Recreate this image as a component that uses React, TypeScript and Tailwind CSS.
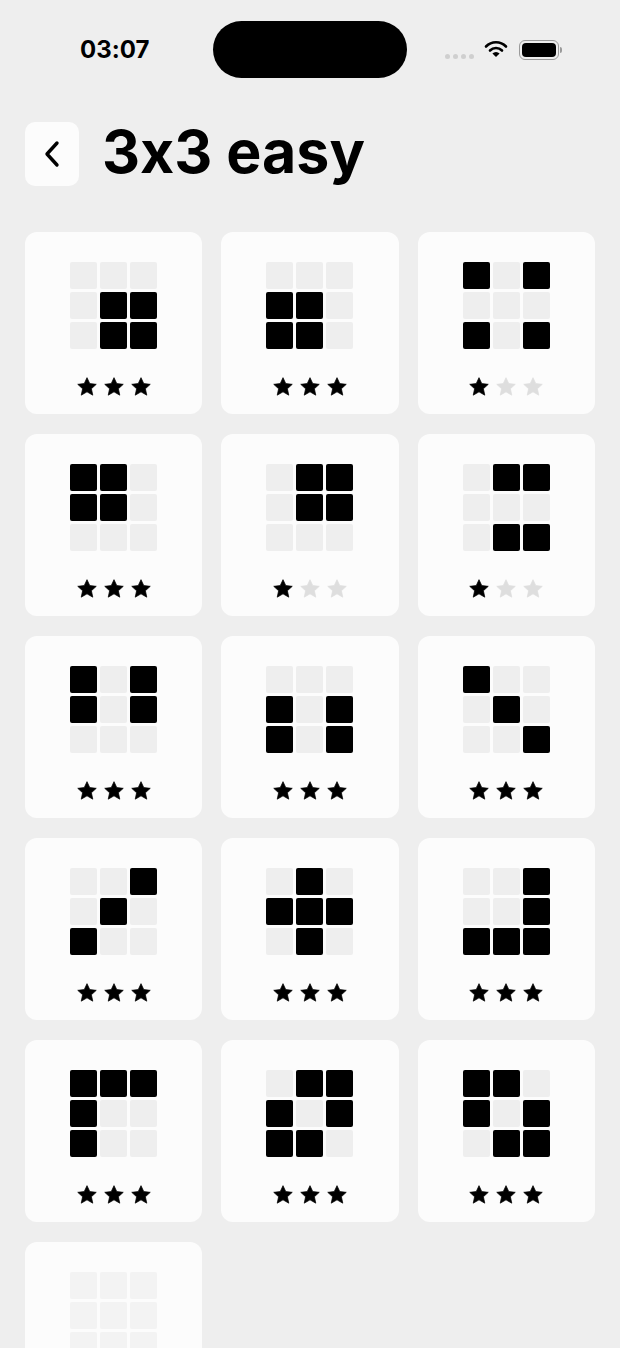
const levels: { cells: string; stars: number; locked?: boolean }[] = [
  { cells: '000011011', stars: 3 },
  { cells: '000110110', stars: 3 },
  { cells: '101000101', stars: 1 },
  { cells: '110110000', stars: 3 },
  { cells: '011011000', stars: 1 },
  { cells: '011000011', stars: 1 },
  { cells: '101101000', stars: 3 },
  { cells: '000101101', stars: 3 },
  { cells: '100010001', stars: 3 },
  { cells: '001010100', stars: 3 },
  { cells: '010111010', stars: 3 },
  { cells: '001001111', stars: 3 },
  { cells: '111100100', stars: 3 },
  { cells: '011101110', stars: 3 },
  { cells: '110101011', stars: 3 },
  { cells: '000000000', stars: 0, locked: true },
];

function Star({ filled }: { filled: boolean }) {
  return (
    <svg width="22" height="22" viewBox="0 0 24 24" className={filled ? 'text-black' : 'text-[#dedede]'}>
      <path
        d="M12 1.8l3 6.5 7.1.8-5.3 4.8 1.5 7-6.3-3.6-6.3 3.6 1.5-7L1.9 9.1 9 8.3z"
        fill="currentColor"
        stroke="currentColor"
        strokeWidth="0.8"
        strokeLinejoin="round"
      />
    </svg>
  );
}

function StatusBar() {
  return (
    <div className="flex items-center h-[100px] pb-[1px]">
      <div className="w-[213px] pl-[80px] text-[24px] font-bold text-black mt-[1px]">03:07</div>
      <div className="w-[194px] h-[57px] rounded-full bg-black" />
      <div className="flex items-center pl-[38px] pt-[1px]">
        <div className="flex gap-[3px] mt-[12px]">
          <span className="w-[5px] h-[5px] rounded-full bg-[#cfcfcf]" />
          <span className="w-[5px] h-[5px] rounded-full bg-[#cfcfcf]" />
          <span className="w-[5px] h-[5px] rounded-full bg-[#cfcfcf]" />
          <span className="w-[5px] h-[5px] rounded-full bg-[#cfcfcf]" />
        </div>
        <svg width="24" height="18" viewBox="0 0 24 18" className="ml-[10px] -mt-[2px]">
          <path d="M2 6.5a14 14 0 0 1 20 0" fill="none" stroke="black" strokeWidth="2.6" strokeLinecap="round" />
          <path d="M6 10.5a8.5 8.5 0 0 1 12 0" fill="none" stroke="black" strokeWidth="2.6" strokeLinecap="round" />
          <path d="M12 17l-3.6-3.4a5 5 0 0 1 7.2 0z" fill="black" />
        </svg>
        <div className="ml-[11px] flex items-center">
          <div className="w-[40px] h-[20px] rounded-[6px] border-[1.5px] border-[#9a9a9a] p-[2px]">
            <div className="w-full h-full rounded-[4px] bg-black" />
          </div>
          <div className="w-[2px] h-[6px] rounded-r-full bg-[#9a9a9a] ml-[1px]" />
        </div>
      </div>
    </div>
  );
}

function LevelCard({ cells, stars, locked }: { cells: string; stars: number; locked?: boolean }) {
  return (
    <div className="h-[182px] rounded-[12px] bg-[#fcfcfc] flex flex-col items-center pt-[30px]">
      <div className={`grid grid-cols-[repeat(3,27px)] gap-[3px] ${locked ? 'opacity-60' : ''}`}>
        {cells.split('').map((c, i) => (
          <div key={i} className={`w-[27px] h-[27px] rounded-[2px] ${c === '1' ? 'bg-black' : 'bg-[#eeeeee]'}`} />
        ))}
      </div>
      {!locked && (
        <div className="flex gap-[5px] mt-[27px]">
          {[0, 1, 2].map((i) => (
            <Star key={i} filled={i < stars} />
          ))}
        </div>
      )}
    </div>
  );
}

export default function App() {
  return (
    <div
      className="w-[620px] h-[1348px] overflow-hidden bg-[#eeeeee] text-black [font-feature-settings:'calt'_0]"
      style={{ fontFamily: 'Inter, "Liberation Sans", sans-serif' }}
    >
      <StatusBar />
      <div className="px-[25px]">
        <div className="flex items-center gap-[23px] mt-[22px]">
          <button className="w-[54px] h-[64px] rounded-[10px] bg-[#fcfcfc] flex items-center justify-center">
            <svg width="18" height="28" viewBox="0 0 18 28">
              <polyline points="14,3 4,14 14,25" fill="none" stroke="black" strokeWidth="3.4" strokeLinecap="round" strokeLinejoin="round" />
            </svg>
          </button>
          <h1 className="text-[59px] font-bold leading-none -mt-[6px]">3x3 easy</h1>
        </div>
        <div className="grid grid-cols-3 gap-x-[19px] gap-y-[20px] mt-[46px]">
          {levels.map((l, i) => (
            <LevelCard key={i} {...l} />
          ))}
        </div>
      </div>
    </div>
  );
}
